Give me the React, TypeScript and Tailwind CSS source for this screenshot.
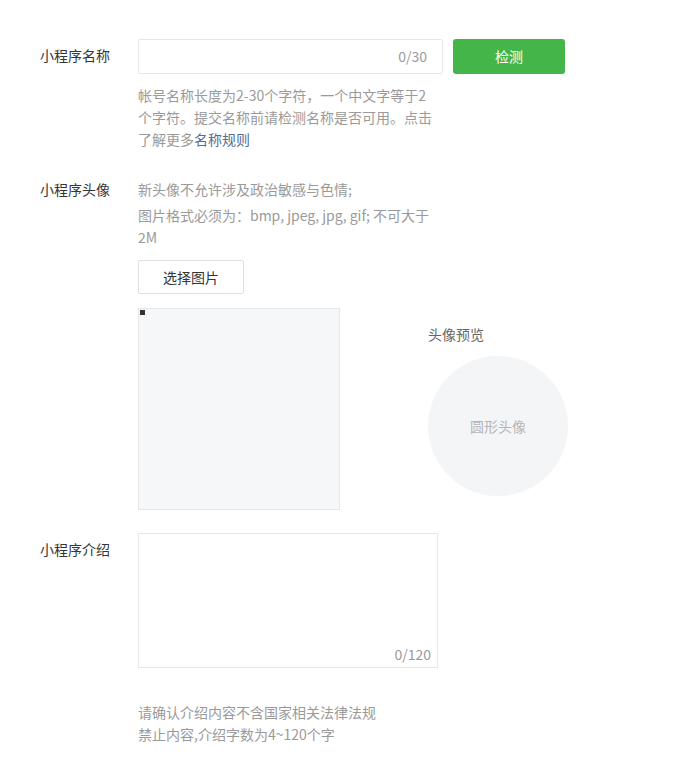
import React from "react";

const font = {
  fontFamily: '"Microsoft YaHei", "Noto Sans CJK SC", "Noto Sans", sans-serif',
};

function Label({ text, pad }: { text: string; pad?: boolean }) {
  return (
    <div className={`w-[98px] shrink-0 text-[14px] leading-[22px] text-[#353535] ${pad ? "pt-[5px]" : ""}`}>
      {text}
    </div>
  );
}

export default function App() {
  return (
    <div className="min-h-screen bg-white pl-[40px] pt-[39px]" style={font}>
      {/* 名称 */}
      <div className="flex">
        <Label text="小程序名称" pad />
        <div className="flex flex-col">
          <div className="flex gap-[10px]">
            <div className="w-[305px] h-[35px] border border-[#e7e7e7] rounded-[2px] flex items-center justify-end pr-[15px]">
              <span className="text-[14px] text-[#9a9a9a]">0/30</span>
            </div>
            <button className="w-[112px] h-[35px] rounded-[3px] bg-[#44b549] text-white text-[14px]">
              检测
            </button>
          </div>
          <div className="mt-[10px] text-[14px] leading-[22px] text-[#9a9a9a] whitespace-nowrap">
            <div>帐号名称长度为2-30个字符，一个中文字等于2</div>
            <div>个字符。提交名称前请检测名称是否可用。点击</div>
            <div>
              了解更多<span className="text-[#576b95]">名称规则</span>
            </div>
          </div>
        </div>
      </div>

      {/* 头像 */}
      <div className="flex mt-[28px]">
        <Label text="小程序头像" />
        <div className="flex flex-col">
          <p className="text-[14px] leading-[22px] text-[#9a9a9a]">新头像不允许涉及政治敏感与色情;</p>
          <div className="mt-[4px] text-[14px] leading-[22px] text-[#9a9a9a] whitespace-nowrap">
            <div>图片格式必须为：bmp, jpeg, jpg, gif; 不可大于</div>
            <div>2M</div>
          </div>
          <button className="mt-[12px] w-[106px] h-[34px] border border-[#e0e0e0] rounded-[2px] bg-white text-[14px] text-[#353535]">
            选择图片
          </button>
          <div className="flex mt-[14px]">
            <div className="w-[202px] h-[202px] border border-[#e4e6e9] bg-[#f6f7f9] p-[1px]">
              <div className="w-[5px] h-[5px] bg-[#333]" />
            </div>
            <div className="ml-[88px] mt-[15px] flex flex-col">
              <div className="text-[14px] leading-[22px] text-[#666]">头像预览</div>
              <div className="mt-[11px] w-[140px] h-[140px] rounded-full bg-[#f4f5f7] flex items-center justify-center">
                <span className="text-[14px] text-[#b5b5b5]">圆形头像</span>
              </div>
            </div>
          </div>
        </div>
      </div>

      {/* 介绍 */}
      <div className="flex mt-[23px]">
        <Label text="小程序介绍" pad />
        <div className="flex flex-col">
          <div className="w-[300px] h-[135px] border border-[#e7e7e7] flex items-end justify-end pr-[6px] pb-[3px]">
            <span className="text-[14px] leading-[20px] text-[#9a9a9a]">0/120</span>
          </div>
          <div className="mt-[33px] text-[14px] leading-[22px] text-[#9a9a9a]">
            <div>请确认介绍内容不含国家相关法律法规</div>
            <div>禁止内容,介绍字数为4~120个字</div>
          </div>
        </div>
      </div>
    </div>
  );
}
